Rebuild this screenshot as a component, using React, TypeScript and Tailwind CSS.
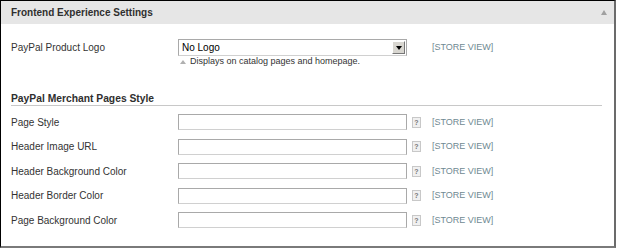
const rows = ['Page Style', 'Header Image URL', 'Header Background Color', 'Header Border Color', 'Page Background Color'];

function Scope({ className = '' }: { className?: string }) {
  return <span className={`block text-[9px] leading-[11px] text-[#6f8992] ${className}`}>[STORE VIEW]</span>;
}

function Help() {
  return (
    <span className="w-[9px] h-[11px] flex items-center justify-center border border-[#c8c8c8] bg-[#f0f0f0] text-[7px] font-bold text-[#777] leading-none">
      ?
    </span>
  );
}

export default function App() {
  return (
    <div className="w-[617px] h-[249px] bg-white" style={{ fontFamily: '"Liberation Sans", Arial, sans-serif' }}>
      <div className="w-[616px] h-[248px] border-l border-t border-black border-r-2 border-r-[#6b6b6b] border-b-2 border-b-[#7a7a7a] flex flex-col">
        {/* Header */}
        <div className="h-[23px] bg-[#e6e6e6] flex items-center justify-between pl-[10px] pr-[7px] shrink-0">
          <span className="text-[10px] font-bold text-[#2f2f2f]">Frontend Experience Settings</span>
          <span className="w-0 h-0 border-l-[3px] border-r-[3px] border-b-[5px] border-l-transparent border-r-transparent border-b-[#a0a0a0]" />
        </div>

        <div className="pl-[10px] pr-[12px] pt-[15px]">
          {/* Logo row */}
          <div className="flex items-start">
            <span className="w-[167px] text-[10px] leading-[17px] text-[#333]">PayPal Product Logo</span>
            <div className="flex flex-col w-[229px]">
              <div className="h-[17px] border border-[#a9a9a9] border-b-[#d0d0d0] bg-white flex items-center justify-between pl-[3px] pr-px">
                <span className="text-[10px] text-black">No Logo</span>
                <span className="w-[13px] h-[13px] bg-[#d8d6d0] border border-t-white border-l-white border-r-[#777] border-b-[#777] flex items-center justify-center">
                  <span className="w-0 h-0 border-l-[3px] border-r-[3px] border-t-[4px] border-l-transparent border-r-transparent border-t-black" />
                </span>
              </div>
              <span className="h-[11px] text-[9px] leading-[11px] text-[#333] pl-[2px] flex items-center gap-[4px]">
                <span className="w-0 h-0 border-l-[3px] border-r-[3px] border-b-[4px] border-l-transparent border-r-transparent border-b-[#b0b0b0]" />
                Displays on catalog pages and homepage.
              </span>
            </div>
            <Scope className="ml-[25px] mt-[3px]" />
          </div>

          {/* Section heading */}
          <div className="mt-[26px] border-b border-[#c8c8c8]">
            <span className="block text-[10.3px] leading-[12px] font-bold text-[#2f2f2f]">PayPal Merchant Pages Style</span>
          </div>

          <div className="flex flex-col mt-[4px]">
            {rows.map((r) => (
              <div key={r} className="flex items-center h-[24.5px]">
                <span className="w-[167px] text-[10px] text-[#333]">{r}</span>
                <div className="w-[229px] h-[16px] border border-[#a9a9a9] border-b-[#d0d0d0] bg-white" />
                <span className="ml-[5px]"><Help /></span>
                <Scope className="ml-[11px]" />
              </div>
            ))}
          </div>
        </div>
      </div>
    </div>
  );
}
